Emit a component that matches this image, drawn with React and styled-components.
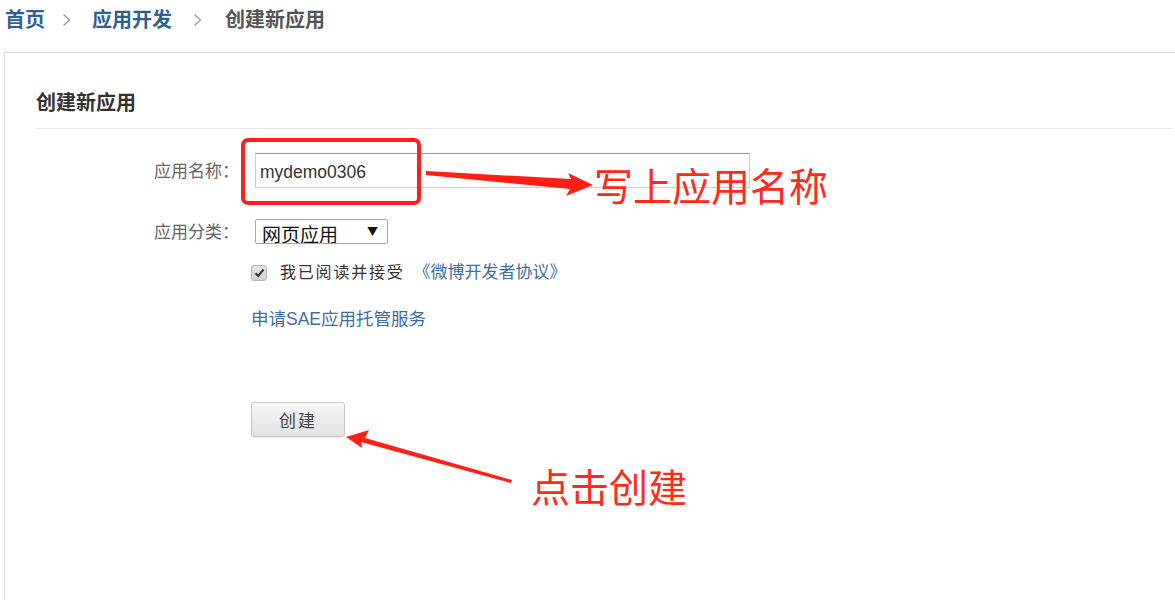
import React from 'react'
import styled, { createGlobalStyle } from 'styled-components'

const GlobalStyle = createGlobalStyle`
  html, body {
    margin: 0;
    padding: 0;
    background: #fff;
  }
  body {
    font-family: "Liberation Sans", "Noto Sans CJK SC", sans-serif;
    color: #333;
  }
`

const Page = styled.div`
  position: relative;
  width: 1175px;
  height: 600px;
  overflow: hidden;
  display: flex;
  flex-direction: column;
`

const Breadcrumb = styled.nav`
  height: 52px;
  display: flex;
  align-items: center;
  padding: 0 0 12px 5px;
  box-sizing: border-box;
  font-size: 20px;
  font-weight: bold;
`

const Crumb = styled.a`
  color: ${p => (p.current ? '#555' : '#2f5f93')};
  text-decoration: none;
  line-height: 24px;
`

const Sep = styled.span`
  display: inline-flex;
  margin: 0 ${p => p.right}px 0 ${p => p.left}px;
  color: #aaa;
`

const Panel = styled.section`
  flex: 1;
  margin-left: 4px;
  border-left: 1px solid #ddd;
  border-top: 1px solid #ddd;
  padding-left: 31px;
`

const Title = styled.h2`
  margin: 38px 3px 0 0;
  padding-bottom: 13px;
  border-bottom: 1px solid #e6e6e6;
  font-size: 20px;
  line-height: 24px;
  font-weight: bold;
  color: #333;
`

const Row = styled.div`
  display: flex;
  align-items: center;
  margin-top: ${p => p.top}px;
  height: ${p => p.h || 20}px;
  line-height: 20px;
`

const Label = styled.label`
  width: 215px;
  padding: 3px 12px 0 0;
  box-sizing: border-box;
  text-align: right;
  font-size: 17px;
  color: #666;
`

const Field = styled.div`
  display: flex;
  align-items: center;
  margin-left: ${p => (p.offset ? 215 : 0)}px;
`

const TextInput = styled.input`
  margin-left: 4px;
  width: 495px;
  height: 35px;
  box-sizing: border-box;
  border: 1px solid #ccc;
  border-top-color: #999;
  padding: 4px 4px 0;
  font-family: "Liberation Sans", sans-serif;
  font-size: 17.5px;
  color: #333;
  outline: none;
`

const Select = styled.div`
  margin-left: 4px;
  width: 133px;
  height: 25px;
  box-sizing: border-box;
  border: 1px solid #a9a9a9;
  border-radius: 2px;
  display: flex;
  align-items: flex-start;
  justify-content: space-between;
  padding: 0 9px 0 6px;
  overflow: hidden;
  font-family: "Noto Sans CJK SC", sans-serif;
  font-size: 19px;
  line-height: 28px;
  color: #111;
`

const Caret = styled.span`
  font-size: 11px;
  line-height: 22px;
  color: #111;
`

const Check = styled.span`
  width: 16px;
  height: 16px;
  box-sizing: border-box;
  border: 1px solid #b5b5b5;
  border-radius: 3px;
  background: linear-gradient(#e6e6e6, #d2d2d2);
  display: inline-flex;
  align-items: center;
  justify-content: center;
  margin-right: 13px;
`

const Text = styled.span`
  font-size: 16px;
  letter-spacing: 1.8px;
  color: #333;
`

const Link = styled.a`
  font-size: ${p => p.size || 16}px;
  color: #3b6ea5;
  text-decoration: none;
  margin-left: ${p => p.gap || 0}px;
`

const Button = styled.button`
  width: 94px;
  height: 35px;
  border: 1px solid #c6c6c6;
  border-radius: 3px;
  background: linear-gradient(#f7f7f7, #e2e2e2);
  font-family: "Noto Sans CJK SC", sans-serif;
  font-size: 17px;
  color: #444;
  letter-spacing: 2px;
  box-shadow: 0 1px 1px rgba(0, 0, 0, 0.08);
`

const Overlay = styled.svg`
  position: absolute;
  left: 0;
  top: 0;
  pointer-events: none;
`

const Highlight = styled.div`
  position: absolute;
  left: 241px;
  top: 138px;
  width: 180px;
  height: 67px;
  box-sizing: border-box;
  border: 4px solid #ff1e1e;
  border-radius: 7px;
`

const Note = styled.div`
  position: absolute;
  left: ${p => p.x}px;
  top: ${p => p.y}px;
  font-family: "Noto Sans CJK SC", sans-serif;
  font-size: 39px;
  line-height: 44px;
  color: #ff2a1a;
  white-space: nowrap;
`

const Chevron = () => (
  <svg width="9" height="14" viewBox="0 0 9 14">
    <path d="M1.5 1.5 L7.5 7 L1.5 12.5" fill="none" stroke="#999" strokeWidth="1.3" />
  </svg>
)

const App = () => (
  <Page>
    <GlobalStyle />
    <Breadcrumb>
      <Crumb>首页</Crumb>
      <Sep left={17} right={21}><Chevron /></Sep>
      <Crumb>应用开发</Crumb>
      <Sep left={21} right={23}><Chevron /></Sep>
      <Crumb current>创建新应用</Crumb>
    </Breadcrumb>

    <Panel>
      <Title>创建新应用</Title>

      <Row top={24} h={35}>
        <Label>应用名称：</Label>
        <TextInput defaultValue="mydemo0306" />
      </Row>

      <Row top={31} h={25}>
        <Label>应用分类：</Label>
        <Select>
          <span>网页应用</span>
          <Caret>▼</Caret>
        </Select>
      </Row>

      <Row top={19}>
        <Field offset>
          <Check>
            <svg width="11" height="10" viewBox="0 0 11 10">
              <path d="M1.5 5.2 L4.2 8 L9.5 1.5" fill="none" stroke="#333" strokeWidth="2" />
            </svg>
          </Check>
          <Text>我已阅读并接受</Text>
          <Link gap={9} size={17}>《微博开发者协议》</Link>
        </Field>
      </Row>

      <Row top={26}>
        <Field offset>
          <Link size={17.5}>申请SAE应用托管服务</Link>
        </Field>
      </Row>

      <Row top={73} h={35}>
        <Field offset>
          <Button>创建</Button>
        </Field>
      </Row>
    </Panel>

    <Highlight />
    <Overlay width="1175" height="600" viewBox="0 0 1175 600">
      <polygon
        points="426,171 571,179 568,173 593,185 566,196 570,189 426,175"
        fill="#ff2015"
      />
      <polygon
        points="512,480 365,438 369,430 346,437 362,448 361,442 511,483"
        fill="#ff2015"
      />
    </Overlay>
    <Note x={594} y={162}>写上应用名称</Note>
    <Note x={531} y={463}>点击创建</Note>
  </Page>
)

export default App
